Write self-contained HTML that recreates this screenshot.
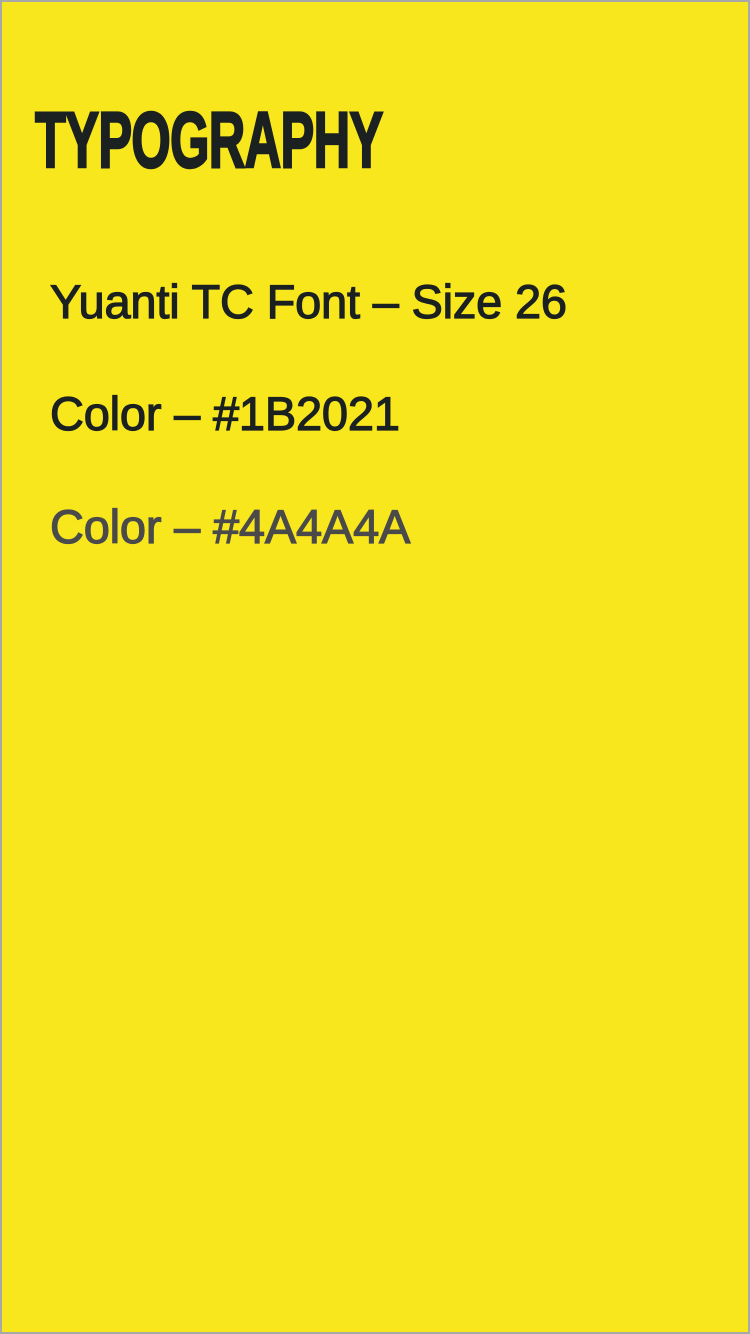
<!DOCTYPE html>
<html><head><meta charset="utf-8"><style>
html,body{margin:0;padding:0}
body{width:750px;height:1334px;background:#F8E71C;box-sizing:border-box;border:2px solid #A8A8A8;position:relative;overflow:hidden;font-family:"Liberation Sans",sans-serif}
.t{position:absolute;left:33px;top:98px;font-size:79px;font-weight:bold;color:#1B2021;-webkit-text-stroke:2.5px #1B2021;transform:scaleX(0.64);transform-origin:left top;white-space:nowrap;line-height:1;letter-spacing:-1px}
.l{position:absolute;left:48px;font-size:47px;color:#1B2021;-webkit-text-stroke:1.2px #1B2021;white-space:nowrap;line-height:1;letter-spacing:-0.2px}
</style></head><body>
<div class="t">TYPOGRAPHY</div>
<div class="l" style="top:276px">Yuanti TC Font – Size 26</div>
<div class="l" style="top:388px">Color – #1B2021</div>
<div class="l" style="top:501px;color:#4A4A4A;-webkit-text-stroke:1.2px #4A4A4A">Color – #4A4A4A</div>
</body></html>
